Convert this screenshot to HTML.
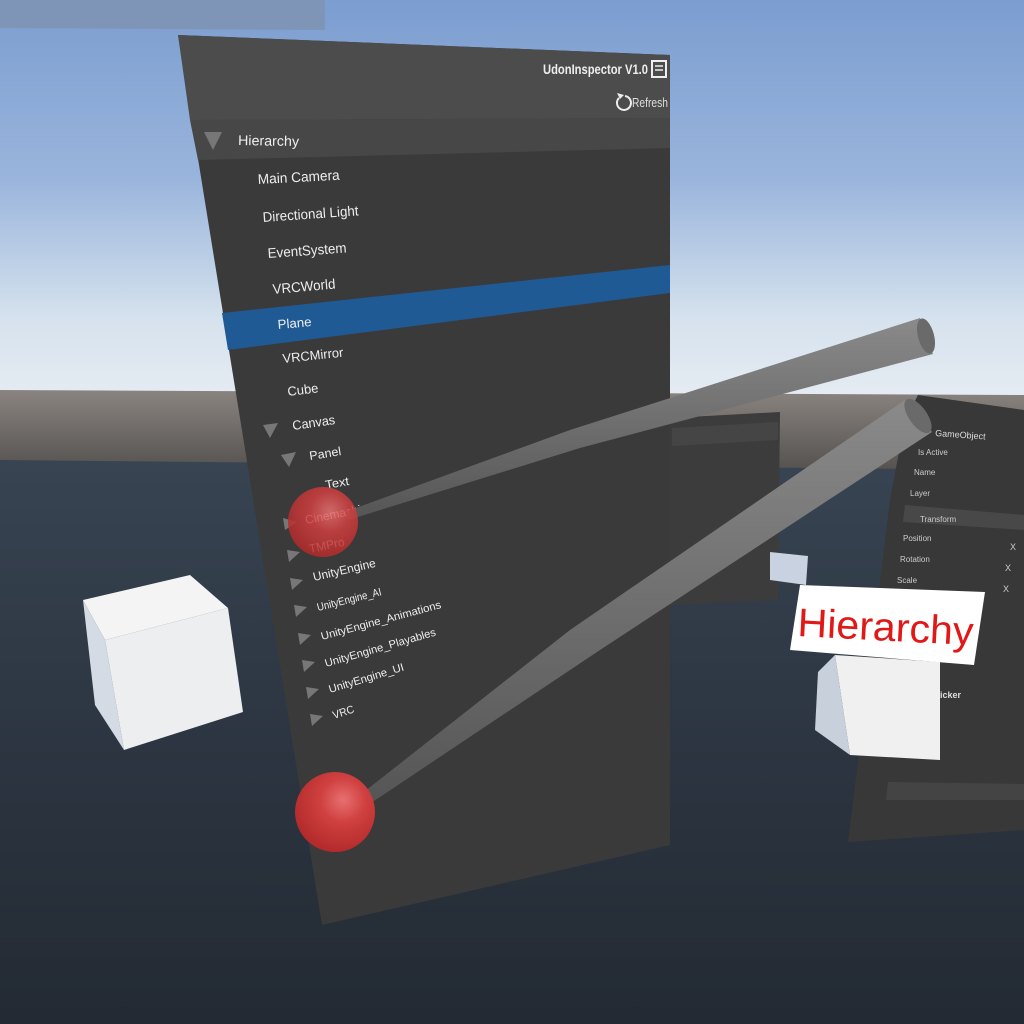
<!DOCTYPE html>
<html><head><meta charset="utf-8"><style>
html,body{margin:0;padding:0;width:1024px;height:1024px;overflow:hidden;background:#222a33}
svg{display:block}
text{font-family:"Liberation Sans",sans-serif}
</style></head><body>
<svg width="1024" height="1024" viewBox="0 0 1024 1024" xmlns="http://www.w3.org/2000/svg">
<defs>
<linearGradient id="sky" x1="0" y1="0" x2="0" y2="1">
<stop offset="0" stop-color="#7b9dd0"/>
<stop offset="0.45" stop-color="#9ab5dc"/>
<stop offset="0.8" stop-color="#d6e2ee"/>
<stop offset="1" stop-color="#e6ecf2"/>
</linearGradient>
<linearGradient id="band" x1="0" y1="0" x2="0" y2="1">
<stop offset="0" stop-color="#8a8480"/>
<stop offset="1" stop-color="#55524f"/>
</linearGradient>
<linearGradient id="ground" x1="0" y1="0" x2="0" y2="1">
<stop offset="0" stop-color="#384452"/>
<stop offset="0.5" stop-color="#2c3541"/>
<stop offset="1" stop-color="#232a33"/>
</linearGradient>
<radialGradient id="ball" cx="0.6" cy="0.35" r="0.7">
<stop offset="0" stop-color="#e87070"/>
<stop offset="0.4" stop-color="#d04040"/>
<stop offset="1" stop-color="#b02828"/>
</radialGradient>
<linearGradient id="stick" x1="0" y1="0" x2="0" y2="1">
<stop offset="0" stop-color="#8a8a8a"/>
<stop offset="1" stop-color="#555"/>
</linearGradient>
</defs>
<rect width="1024" height="400" fill="url(#sky)"/>
<polygon points="0,390 1024,395 1024,470 0,465" fill="url(#band)"/>
<polygon points="0,460 1024,470 1024,1024 0,1024" fill="url(#ground)"/>
<polygon points="0,0 325,0 325,30 0,28" fill="#7f95b8"/>
<!-- mid panel behind -->
<polygon points="670,418 780,412 778,600 670,605" fill="#3c3c3c"/>
<polygon points="672,428 778,422 778,440 672,446" fill="#454545"/>
<!-- right panel -->
<polygon points="918,395 1024,410 1024,830 848,842 890,500 905,420" fill="#383838"/>
<polygon points="905,505 1024,515 1024,530 903,522" fill="#484848"/>
<text x="935" y="436" font-size="9" fill="#ddd" transform="rotate(4 935 436)">GameObject</text>
<text x="918" y="455" font-size="8" fill="#ccc">Is Active</text>
<text x="914" y="475" font-size="8" fill="#ccc">Name</text>
<text x="910" y="496" font-size="8" fill="#ccc">Layer</text>
<text x="920" y="522" font-size="8" fill="#ccc">Transform</text>
<text x="903" y="541" font-size="8" fill="#ccc">Position</text>
<text x="900" y="562" font-size="8" fill="#ccc">Rotation</text>
<text x="897" y="583" font-size="8" fill="#ccc">Scale</text>
<text x="1010" y="550" font-size="9" fill="#ccc">X</text>
<text x="1005" y="571" font-size="9" fill="#ccc">X</text>
<text x="1003" y="592" font-size="9" fill="#ccc">X</text>
<text x="928" y="698" font-size="9" fill="#ddd" font-weight="bold">r Picker</text>
<text x="995" y="796" font-size="8" fill="#ccc">OK</text>
<polygon points="888,782 1024,784 1024,800 886,800" fill="#444"/>
<!-- small cube mid -->
<polygon points="770,552 808,556 806,585 770,580" fill="#c8d2e0"/>
<!-- left cube -->
<polygon points="83,600 190,575 228,608 105,640" fill="#f4f4f4"/>
<polygon points="83,600 105,640 124,750 95,705" fill="#d4dbe4"/>
<polygon points="105,640 228,608 243,712 124,750" fill="#eceef0"/>
<!-- right cube -->
<polygon points="835,655 940,662 940,760 850,755" fill="#f0f0f0"/>
<polygon points="835,655 850,755 815,730 818,672" fill="#c8d0dc"/>
<!-- Hierarchy label -->
<polygon points="800,585 985,592 974,665 790,650" fill="#ffffff"/>
<text x="797" y="636" font-size="40" fill="#e01818" transform="rotate(3 797 636)" textLength="176" lengthAdjust="spacingAndGlyphs">Hierarchy</text>
<!-- main panel -->
<polygon points="178,35 670,55 670,845 322,925" fill="#3a3a3a"/>
<polygon points="178,35 670,55 670,118 190,120" fill="#4c4c4c"/>
<polygon points="190,120 670,118 670,148 198,160" fill="#474747"/>
<polygon points="222,313 670,265 670,293 228,350" fill="#205a94"/>
<polygon points="204,132 222,132 213,150" fill="#777"/>
<text x="543" y="74" font-size="14" font-weight="bold" fill="#eee" textLength="105" lengthAdjust="spacingAndGlyphs">UdonInspector V1.0</text>
<rect x="652" y="61" width="14" height="16" fill="none" stroke="#eee" stroke-width="2"/>
<path d="M655 66h8M655 70h8" stroke="#eee" stroke-width="1.5"/>
<path d="M625 96 a7 7 0 1 1 -6 2" fill="none" stroke="#eee" stroke-width="2"/>
<path d="M617 93 l3 6 l4 -4z" fill="#eee"/>
<text x="632" y="107" font-size="13" fill="#ddd" textLength="36" lengthAdjust="spacingAndGlyphs">Refresh</text>
<g fill="#eee" font-size="14">
<text x="238" y="145" transform="rotate(1 238 145)" textLength="61" lengthAdjust="spacingAndGlyphs">Hierarchy</text>
<text x="258" y="184" transform="rotate(-3 258 184)" textLength="82" lengthAdjust="spacingAndGlyphs">Main Camera</text>
<text x="263" y="222" transform="rotate(-4 263 222)" textLength="96" lengthAdjust="spacingAndGlyphs">Directional Light</text>
<text x="268" y="258" transform="rotate(-4 268 258)" textLength="79" lengthAdjust="spacingAndGlyphs">EventSystem</text>
<text x="273" y="294" transform="rotate(-5 273 294)" textLength="63" lengthAdjust="spacingAndGlyphs">VRCWorld</text>
<text x="278" y="329" transform="rotate(-5 278 329)" font-size="13" textLength="34" lengthAdjust="spacingAndGlyphs">Plane</text>
<text x="283" y="363" transform="rotate(-6 283 363)" font-size="13" textLength="61" lengthAdjust="spacingAndGlyphs">VRCMirror</text>
<text x="288" y="396" transform="rotate(-7 288 396)" font-size="13" textLength="31" lengthAdjust="spacingAndGlyphs">Cube</text>
<text x="293" y="430" transform="rotate(-8 293 430)" font-size="13" textLength="43" lengthAdjust="spacingAndGlyphs">Canvas</text>
<text x="310" y="460" transform="rotate(-9 310 460)" font-size="12" textLength="32" lengthAdjust="spacingAndGlyphs">Panel</text>
<text x="326" y="489" transform="rotate(-10 326 489)" font-size="12" textLength="24" lengthAdjust="spacingAndGlyphs">Text</text>
<text x="306" y="524" transform="rotate(-11 306 524)" font-size="12" textLength="70" lengthAdjust="spacingAndGlyphs">Cinemachine</text>
<text x="310" y="553" transform="rotate(-12 310 553)" font-size="12" textLength="36" lengthAdjust="spacingAndGlyphs">TMPro</text>
<text x="314" y="581" transform="rotate(-13 314 581)" font-size="12" textLength="64" lengthAdjust="spacingAndGlyphs">UnityEngine</text>
<text x="318" y="611" transform="rotate(-14 318 611)" font-size="11" textLength="66" lengthAdjust="spacingAndGlyphs">UnityEngine_AI</text>
<text x="322" y="640" transform="rotate(-15 322 640)" font-size="11" textLength="124" lengthAdjust="spacingAndGlyphs">UnityEngine_Animations</text>
<text x="326" y="667" transform="rotate(-16 326 667)" font-size="11" textLength="115" lengthAdjust="spacingAndGlyphs">UnityEngine_Playables</text>
<text x="330" y="693" transform="rotate(-17 330 693)" font-size="11" textLength="78" lengthAdjust="spacingAndGlyphs">UnityEngine_UI</text>
<text x="334" y="719" transform="rotate(-18 334 719)" font-size="11" textLength="22" lengthAdjust="spacingAndGlyphs">VRC</text>
</g>
<g fill="#777">
<polygon points="263,425 278,423 270,438"/>
<polygon points="281,455 296,452 289,467"/>
<polygon points="283,518 297,522 285,530"/>
<polygon points="287,550 300,552 289,562"/>
<polygon points="290,578 303,580 292,590"/>
<polygon points="294,605 307,607 296,617"/>
<polygon points="298,633 311,635 300,645"/>
<polygon points="302,660 315,662 304,672"/>
<polygon points="306,687 319,689 308,699"/>
<polygon points="310,714 323,716 312,726"/>
</g>
<!-- sticks (tapered) -->
<polygon points="345,512 570,430 920,318 933,354 580,448 348,520" fill="url(#stick)"/>
<ellipse cx="926" cy="336" rx="8" ry="18" fill="#6a6a6a" transform="rotate(-15 926 336)"/>
<polygon points="360,795 570,630 905,400 932,432 600,650 368,805" fill="url(#stick)"/>
<ellipse cx="918" cy="416" rx="9" ry="20" fill="#6a6a6a" transform="rotate(-35 918 416)"/>
<circle cx="323" cy="522" r="35" fill="url(#ball)" opacity="0.85"/>
<circle cx="335" cy="812" r="40" fill="url(#ball)"/>
</svg>
</body></html>
